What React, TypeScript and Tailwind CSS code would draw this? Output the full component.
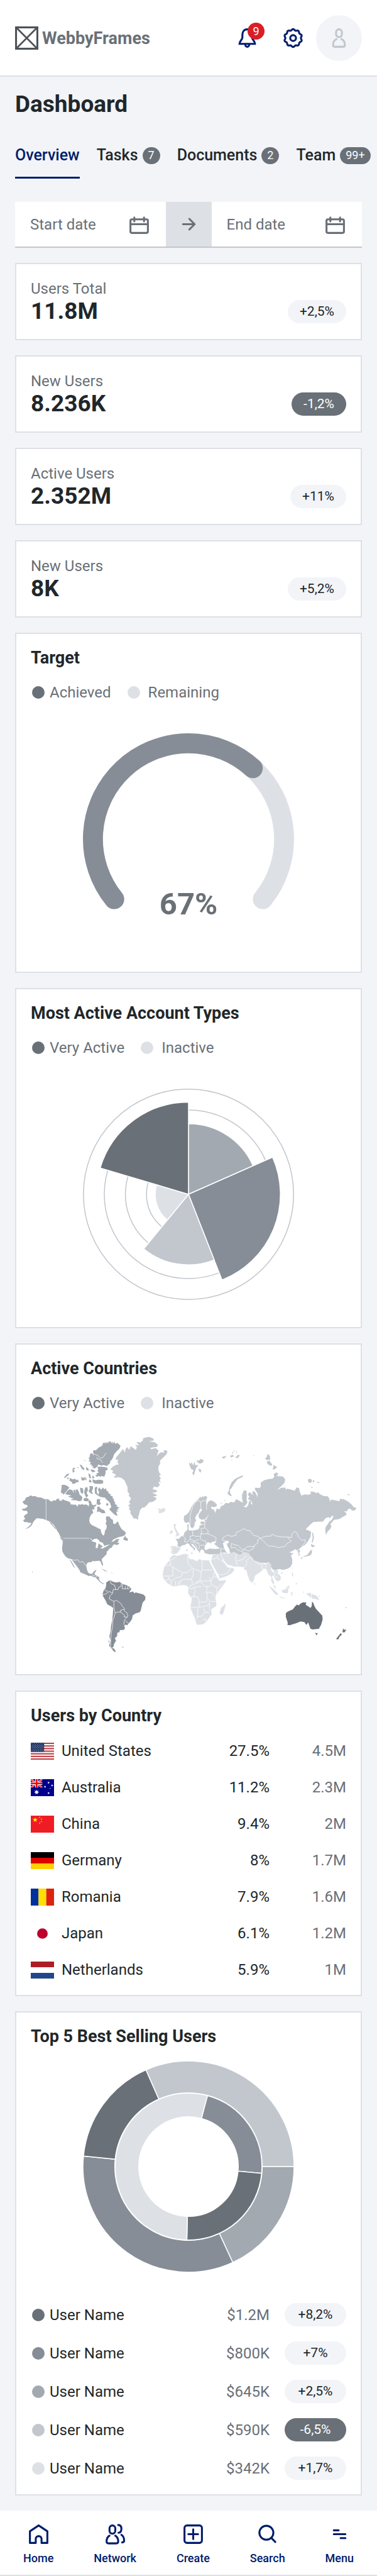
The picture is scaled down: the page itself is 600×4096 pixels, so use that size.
import React from "react";

type Children = { children: React.ReactNode };

const SHADES = ["#697077", "#878d96", "#a2a9b0", "#c1c7cd", "#dde1e6"];

/* ---------- geometry helpers ---------- */

// Point on a circle around (220, 220); the angle runs clockwise from 12 o'clock.
function at(radius: number, degrees: number) {
  const t = (degrees * Math.PI) / 180;
  return `${(220 + radius * Math.sin(t)).toFixed(2)} ${(220 - radius * Math.cos(t)).toFixed(2)}`;
}

function wedge(radius: number, from: number, to: number) {
  const large = to - from > 180 ? 1 : 0;
  return `M220 220L${at(radius, from)}A${radius} ${radius} 0 ${large} 1 ${at(radius, to)}Z`;
}

function ringPart(outer: number, inner: number, from: number, to: number) {
  const large = to - from > 180 ? 1 : 0;
  return `M${at(outer, from)}A${outer} ${outer} 0 ${large} 1 ${at(outer, to)}L${at(inner, to)}A${inner} ${inner} 0 ${large} 0 ${at(inner, from)}Z`;
}

function arc(radius: number, from: number, to: number) {
  const large = to - from > 180 ? 1 : 0;
  return `M${at(radius, from)}A${radius} ${radius} 0 ${large} 1 ${at(radius, to)}`;
}

function gearPath() {
  const points: string[] = [];
  for (let i = 0; i < 120; i++) {
    const t = (i / 120) * Math.PI * 2;
    const r = 8.6 + 0.6 * Math.cos(10 * t);
    points.push(`${(12 + r * Math.sin(t)).toFixed(2)} ${(12 - r * Math.cos(t)).toFixed(2)}`);
  }
  return `M${points.join("L")}Z`;
}

/* ---------- icons ---------- */

function Icon({ children }: Children) {
  return (
    <svg
      viewBox="0 0 24 24"
      className="size-[37px] shrink-0"
      fill="none"
      stroke="currentColor"
      strokeWidth="2"
      strokeLinecap="round"
      strokeLinejoin="round"
      aria-hidden="true"
    >
      {children}
    </svg>
  );
}

const BellIcon = () => (
  <Icon>
    <path
      strokeLinejoin="miter"
      d="M12 3C8.7 3 7 5.5 7 8.5v3C7 13.5 4 15 4 18h16c0-3-3-4.500-3-6.500v-3C17 5.500 15.300 3 12 3Z"
    />
    <path strokeLinecap="butt" d="M10 18.500v.5a2 2 0 0 0 4 0v-.5" />
  </Icon>
);

const GearIcon = () => (
  <Icon>
    <path d={gearPath()} />
    <circle cx="12" cy="12" r="3" />
  </Icon>
);

const PersonIcon = () => (
  <Icon>
    <rect x="9" y="3" width="6" height="8" rx="3" />
    <path d="M9.500 13C7 14.200 6 16.300 6 18.500v1A1.500 1.500 0 0 0 7.500 21h9a1.500 1.500 0 0 0 1.500-1.500v-1c0-2.200-1-4.300-3.500-5.500" />
  </Icon>
);

const CalendarIcon = () => (
  <Icon>
    <rect x="3" y="7" width="18" height="14" rx="1.500" />
    <path d="M3 12h18M7 5v4M17 5v4" />
  </Icon>
);

const ArrowIcon = () => (
  <Icon>
    <path d="M6 12h12M12.500 6.500 18 12l-5.500 5.500" />
  </Icon>
);

const HomeIcon = () => (
  <Icon>
    <path strokeLinecap="butt" d="M3 21h6v-4a3 3 0 0 1 6 0v4h6V9l-9-6-9 6Z" />
  </Icon>
);

const NetworkIcon = () => (
  <Icon>
    <rect x="6" y="3" width="6" height="8.500" rx="3" />
    <path d="M6 13.500c-2 1.200-3 3.500-3 6C3 21 3.800 21.500 5 21.500h8c1.200 0 2-.5 2-2 0-2.500-1-4.800-3-6" />
    <path d="M15 2.500c2.300 0 3.300 1.500 3.300 4s-1 4-3 4M18.300 12.700c2 1.300 2.800 3.300 2.800 5.800 0 1.500-.6 2-2.100 2" />
  </Icon>
);

const CreateIcon = () => (
  <Icon>
    <rect x="3" y="3" width="18" height="18" rx="2.500" />
    <path d="M12 7v10M7 12h10" />
  </Icon>
);

const SearchIcon = () => (
  <Icon>
    <circle cx="11" cy="10.500" r="7.200" />
    <path d="m16.200 16 4 4" />
  </Icon>
);

const MenuIcon = () => (
  <Icon>
    <path d="M6 8h5M6 12h12M13 16h5" />
  </Icon>
);

const LogoMark = () => (
  <svg viewBox="0 0 48 48" className="size-[37px] shrink-0" fill="none" stroke="#4d5358" aria-hidden="true">
    <rect x="2" y="2" width="44" height="44" strokeWidth="4" />
    <path d="m3 3 42 42M45 3 3 45" strokeWidth="3.500" />
  </svg>
);

/* ---------- small parts ---------- */

function Dot({ color }: { color: string }) {
  return (
    <svg viewBox="0 0 24 24" className="size-6 shrink-0" aria-hidden="true">
      <circle cx="12" cy="12" r="10" fill={color} />
    </svg>
  );
}

function Card({ title, children }: { title: string } & Children) {
  return (
    <section className="border-2 border-[#dde1e6] bg-white pt-[22px]">
      <h2 className="px-[23px] text-[27px] leading-8 font-bold">{title}</h2>
      {children}
    </section>
  );
}

function Legend({ first, second }: { first: string; second: string }) {
  return (
    <ul className="mt-[22px] flex gap-6 px-[23px] text-2xl leading-[34px] text-[#697077]">
      <li className="flex items-center gap-1.5">
        <Dot color="#697077" />
        {first}
      </li>
      <li className="flex items-center gap-[11px]">
        <Dot color="#dde1e6" />
        {second}
      </li>
    </ul>
  );
}

function pillTone(change: string) {
  return change.startsWith("-") ? "bg-[#697077] text-white" : "bg-[#f2f4f8] text-[#21272a]";
}

/* ---------- page sections ---------- */

function Header() {
  return (
    <header className="flex items-center justify-between border-b-2 border-[#dde1e6] bg-white px-6 pt-6 pb-[23px]">
      <a href="#home" className="flex items-center gap-1.5 text-[27px] leading-9 font-bold text-[#697077]">
        <LogoMark />
        WebbyFrames
      </a>
      <div className="flex items-center text-[#001d6c]">
        <button type="button" aria-label="Notifications" className="relative mr-9">
          <BellIcon />
          <span className="absolute -top-[6px] left-[19px] flex size-[27px] items-center justify-center rounded-full bg-[#da1e28] text-lg leading-none text-white">
            9
          </span>
        </button>
        <button type="button" aria-label="Settings" className="mr-[18px]">
          <GearIcon />
        </button>
        <button
          type="button"
          aria-label="Profile"
          className="flex size-[73px] items-center justify-center rounded-full bg-[#f2f4f8] text-[#c1c7cd]"
        >
          <PersonIcon />
        </button>
      </div>
    </header>
  );
}

const tabs = [
  { name: "Overview", badge: "", active: true },
  { name: "Tasks", badge: "7", active: false },
  { name: "Documents", badge: "2", active: false },
  { name: "Team", badge: "99+", active: false },
];

function Tabs() {
  return (
    <nav className="mt-[23px] flex gap-[27px] pl-6 text-[25px] leading-8 font-medium whitespace-nowrap">
      {tabs.map((tab) => (
        <a
          key={tab.name}
          href={`#${tab.name.toLowerCase()}`}
          className={
            tab.active
              ? "flex items-center border-b-[3px] border-[#001d6c] pt-5 pb-[18px] text-[#001d6c]"
              : "flex items-center gap-[7px] border-b-[3px] border-transparent pt-5 pb-[18px]"
          }
        >
          {tab.name}
          {tab.badge && (
            <span className="flex h-[27px] min-w-[27px] items-center justify-center rounded-full bg-[#697077] px-[9px] text-lg leading-none font-normal text-white">
              {tab.badge}
            </span>
          )}
        </a>
      ))}
    </nav>
  );
}

function DateField({ id, label }: { id: string; label: string }) {
  return (
    <div className="flex min-w-0 flex-1 items-center bg-white px-6 text-[#697077]">
      <input
        id={id}
        type="text"
        aria-label={label}
        placeholder={label}
        className="w-full min-w-0 flex-1 bg-transparent text-2xl leading-8 outline-none placeholder:text-[#697077] placeholder:opacity-100"
      />
      <CalendarIcon />
    </div>
  );
}

function DateRange() {
  return (
    <div className="flex border-b-2 border-[#c1c7cd]">
      <DateField id="start-date" label="Start date" />
      <div className="flex items-center justify-center bg-[#dde1e6] px-[18px] py-[17px] text-[#697077]">
        <ArrowIcon />
      </div>
      <DateField id="end-date" label="End date" />
    </div>
  );
}

const stats = [
  { label: "Users Total", value: "11.8M", change: "+2,5%" },
  { label: "New Users", value: "8.236K", change: "-1,2%" },
  { label: "Active Users", value: "2.352M", change: "+11%" },
  { label: "New Users", value: "8K", change: "+5,2%" },
];

function StatCard({ label, value, change }: (typeof stats)[number]) {
  return (
    <section className="flex items-end justify-between border-2 border-[#dde1e6] bg-white px-[23px] pt-[22px] pb-[25px]">
      <div>
        <p className="text-2xl leading-[34px] text-[#697077]">{label}</p>
        <p className="text-[37px] leading-[38px] font-bold">{value}</p>
      </div>
      <span className={`flex h-[37px] items-center rounded-full px-[19px] text-[21px] leading-none ${pillTone(change)}`}>
        {change}
      </span>
    </section>
  );
}

function TargetCard() {
  return (
    <Card title="Target">
      <Legend first="Achieved" second="Remaining" />
      <div className="relative mx-auto mt-12 mb-[43px] w-[336px]">
        <svg viewBox="0 0 440 440" className="w-full" fill="none" strokeWidth="41.500" strokeLinecap="round" aria-hidden="true">
          <path d={arc(199.2, 231, 489)} stroke="#dde1e6" />
          <path d={arc(199.2, 231, 402.3)} stroke="#878d96" />
        </svg>
        <p className="absolute inset-x-0 bottom-8 text-center text-[49px] leading-[64px] font-bold text-[#697077]">67%</p>
      </div>
    </Card>
  );
}

const wedges = [
  { radius: 147, from: 0, to: 66.2, color: "#a2a9b0" },
  { radius: 191.5, from: 66.2, to: 158.6, color: "#878d96" },
  { radius: 147, from: 158.6, to: 219.4, color: "#c1c7cd" },
  { radius: 69.5, from: 219.4, to: 286.6, color: "#dde1e6" },
  { radius: 192, from: 286.6, to: 360, color: "#697077" },
];

function AccountTypesCard() {
  return (
    <Card title="Most Active Account Types">
      <Legend first="Very Active" second="Inactive" />
      <svg viewBox="0 0 440 440" className="mx-auto mt-12 mb-[43px] w-[336px]" aria-hidden="true">
        <g fill="none" stroke="#c1c7cd" strokeWidth="2">
          {[219, 175.5, 131.5, 87.5].map((r) => (
            <circle key={r} cx="220" cy="220" r={r} />
          ))}
        </g>
        {wedges.map((w) => (
          <path key={w.color} d={wedge(w.radius, w.from, w.to)} fill={w.color} stroke="#fff" strokeWidth="2" />
        ))}
      </svg>
    </Card>
  );
}

const northAmerica = [
  "M32 440 48 428 54 414 72 408 84 400 96 406 110 404 128 412 150 414 170 424 192 424 208 436 218 438 226 430 240 432 250 420 264 424 262 432 274 434 286 424 296 430 310 434 326 440 334 448 332 456 350 458 368 458 376 472 382 456 396 458 410 454 416 460 430 456 440 462 446 470 450 452 444 440 452 428 462 440 466 456 476 462 486 460 496 454 492 466 480 474 484 488 468 486 472 498 476 508 462 520 452 540 450 560 456 576 470 588 490 596 512 608 522 612 524 630 532 646 540 652 546 640 548 622 558 606 560 590 552 576 558 562 554 548 556 532 576 532 586 546 598 552 600 576 612 580 620 570 630 562 634 578 644 596 654 612 668 622 680 634 672 650 656 656 636 660 616 668 600 676 590 690 604 684 620 674 640 672 630 684 634 690 620 694 640 698 626 710 606 706 598 712 592 724 574 734 570 744 560 750 558 768 540 786 528 798 530 812 536 828 534 842 528 834 522 816 512 808 500 810 484 812 470 810 462 818 446 818 434 826 432 844 436 866 444 882 456 890 470 888 478 876 496 864 490 878 482 888 488 898 500 904 514 912 510 922 518 936 534 948 546 952 536 954 520 944 508 932 490 914 472 908 462 902 448 904 430 896 408 886 394 880 390 868 372 842 350 814 336 798 322 796 304 784 292 768 282 750 280 728 284 700 284 684 290 680 280 668 266 652 262 640 250 622 240 600 228 584 214 570 196 560 180 554 160 546 140 544 122 542 108 556 100 566 90 588 72 602 46 612 70 596 88 578 84 570 70 572 60 566 46 568 36 556 50 546 40 532 52 520 66 512 60 496 40 496 26 486 48 482 66 470 60 460 44 456Z",
  "M538 70 546 76 548 66 556 78 560 64 568 76 572 64 584 62 588 76 594 62 598 78 606 64 612 78 626 72 646 90 640 106 622 124 606 142 598 164 588 182 580 184 582 196 574 204 560 216 540 210 524 214 508 206 500 220 484 232 470 226 476 214 464 218 464 204 452 208 460 194 446 184 454 176 444 166 454 162 452 156 458 138 466 136 480 152 474 128 476 118 492 118 510 100 530 90Z",
  "M500 222 520 220 540 222 562 226 566 240 552 246 552 262 544 284 528 278 520 284 508 278 500 284 486 276 500 270 494 262 510 258 500 244 508 238Z",
  "M470 300 490 306 510 302 536 306 538 318 534 326 510 328 484 326 472 316Z",
  "M330 290 344 300 362 296 370 306 380 300 384 316 370 318 356 328 340 326 344 318 326 308Z",
  "M290 292 308 268 324 262 320 274 310 280 300 290ZM346 232 358 226 362 232 352 240 360 250 346 258ZM390 206 404 212 410 224 420 230 414 244 400 228ZM430 222 444 232 448 246 432 242ZM398 284 412 292 420 284 424 304 404 308ZM444 262 456 268 462 296 450 290ZM450 300 462 306 464 320 448 316ZM456 238 476 240 490 250 470 256ZM420 180h5v5h-5ZM308 288 322 290 318 302ZM424 286 432 290 432 306 426 304ZM376 222 384 226 380 232ZM470 276 482 286 478 296 468 290Z",
  "M278 334 296 334 312 340 326 352 316 364 304 378 290 394 272 380 276 360Z",
  "M312 372 328 362 344 368 356 388 350 366 362 366 368 384 366 364 376 362 386 380 390 396 402 404 408 416 400 434 384 436 366 430 350 430 332 428 352 420 338 416 316 406 340 402 326 398 300 392Z",
  "M392 352 410 356 414 376 408 392 396 380ZM450 342 472 342 474 356 466 374 474 392 458 386 446 374 454 356ZM424 352 438 348 442 366 434 386 444 402 432 414 424 400 418 380ZM412 424 430 414 448 424 444 436 420 436Z",
  "M484 352 496 346 502 352 496 366 498 382 506 396 512 380 504 364 514 350 524 366 536 350 544 362 556 356 558 370 572 378 568 386 584 392 582 400 598 408 596 416 606 426 604 434 614 446 608 452 626 462 618 468 640 476 628 480 634 490 620 488 632 504 618 500 624 520 628 530 608 520 594 506 580 492 574 486 588 474 582 452 574 438 560 428 548 414 530 412 516 408 500 398 486 388Z",
  "M500 472 512 470 526 486 544 492 552 510 530 512 518 504 510 500 498 506 500 486ZM556 450 570 450 568 464 556 462ZM498 424 520 424 516 440 524 452 510 462 496 452Z",
  "M662 672 676 652 680 664 690 668 692 684 670 680ZM324 798 338 812 350 832 362 856 350 844 338 822ZM526 858 542 864 566 878 550 874ZM92 878h4v4h-4ZM200 566 214 572 226 590 242 604 244 614 224 594ZM266 656 290 678 286 686 270 668Z",
];

const southAmerica = [
  "M556 944 572 934 584 932 600 940 620 944 640 940 650 948 664 956 680 960 700 970 714 984 700 1006 724 1000 732 1012 740 1006 770 1014 790 1020 802 1034 800 1052 784 1070 778 1096 772 1120 766 1130 740 1138 722 1150 718 1172 706 1190 694 1204 688 1212 676 1208 668 1216 674 1228 668 1240 642 1242 638 1256 626 1258 624 1280 610 1292 618 1308 606 1328 600 1350 586 1352 574 1340 584 1310 576 1280 584 1250 586 1220 594 1180 598 1140 600 1104 584 1092 564 1082 552 1056 536 1030 534 1016 540 994 552 980 556 960Z",
  "M584 1354 604 1356 618 1378 604 1376 594 1362ZM570 1300l6 14-2 12ZM656 1346h8v4h-8Z",
];

const greenland =
  "M582 238 596 222 614 210 634 206 626 190 632 178 614 176 620 160 638 140 650 124 662 110 674 134 676 112 688 98 700 116 708 92 726 104 742 116 748 98 738 84 762 88 744 66 770 70 788 54 784 46 800 38 826 34 850 44 856 56 824 62 860 68 880 84 874 96 836 102 834 112 866 104 884 120 872 154 886 140 900 130 920 134 914 120 932 118 940 128 930 146 908 168 892 184 894 200 884 216 882 240 890 262 900 270 886 278 898 292 890 304 898 318 882 314 892 336 876 350 856 344 846 362 866 366 878 374 860 382 842 384 864 392 876 402 848 408 872 416 864 430 846 440 824 444 812 460 798 474 780 478 768 492 762 516 756 536 756 552 742 544 728 544 716 524 706 510 710 500 698 484 704 476 694 462 708 452 698 442 712 420 696 400 702 390 690 378 690 350 682 330 670 306 650 290 630 286 606 292 612 284 600 282 620 274 606 264 592 258 600 246Z";

const northEurasia = [
  "M284 438 300 430 320 440 336 456 334 470 314 474 300 470 304 486 318 488 326 510 336 482 352 488 364 466 378 462 392 446 408 450 424 440 444 444 458 424 478 434 500 446 494 420 494 396 506 368 522 370 524 400 522 430 528 440 516 464 502 470 520 476 532 462 540 432 548 434 552 456 560 456 554 440 544 428 530 424 540 408 530 396 540 378 556 392 564 400 556 376 572 374 586 398 588 416 592 390 574 362 576 352 604 354 612 344 610 320 632 306 660 298 684 296 696 284 692 266 710 256 720 264 712 280 736 280 752 284 764 300 760 320 746 336 728 352 714 368 740 352 766 352 768 366 776 358 800 364 824 370 834 350 852 356 854 376 866 402 884 394 912 396 926 388 922 374 946 378 958 386 970 380 980 392 1004 404 1030 406 1040 420 1044 440 1050 426 1076 430 1104 436 1106 422 1130 424 1160 440 1180 458 1192 474 1210 478 1200 494 1180 494 1174 484 1158 484 1150 500 1130 498 1144 508 1148 522 1126 534 1100 548 1070 552 1060 564 1046 580 1054 592 1044 612 1030 624 1020 648 1014 620 1016 600 1032 576 1040 564 1056 552 1066 530 1056 528 1044 542 1034 536 1014 544 1000 564 976 564 940 566 920 584 892 612 912 620 926 628 922 660 908 684 890 708 872 718 852 734 858 752 846 756 838 744 826 736 806 750 790 754 804 762 818 758 800 776 808 800 808 826 796 848 780 858 750 866 728 860 700 868 686 864 678 848 676 834 664 820 640 824 610 822 590 820 566 808 562 796 544 776 536 760 512 756 496 762 480 772 460 764 444 754 420 764 380 758 360 756 350 766 320 768 290 768 262 762 254 744 240 736 232 748 230 762 222 748 214 742 204 724 190 708 176 700 180 712 196 726 202 736 192 746 190 732 172 718 160 702 148 700 142 708 120 712 108 722 90 718 92 700 88 684 76 674 100 670 112 656 130 650 134 630 146 622 154 610 150 584 160 578 160 618 178 620 196 618 220 612 228 600 226 592 240 584 232 572 240 562 262 566 256 552 270 552 284 524 276 500 272 460Z",
  "M130 540 132 528 150 518 164 500 176 476 192 450 206 436 222 424 232 408 240 416 246 404 254 412 262 402 276 410 270 430 272 460 284 500 282 526 264 548 240 552 224 540 222 522 236 500 244 492 238 480 228 490 224 506 208 524 200 544 208 556 198 570 196 590 184 606 174 600 166 580 160 564 150 572 138 570 130 556Z",
  "M500 274 498 284 466 300 446 324 430 352 418 366 420 388 432 404 416 402 402 386 412 370 416 346 430 316 452 296 480 282Z",
  "M162 192 172 204 178 192 188 212 196 188 200 210 220 210 206 230 200 250 192 276 182 260 192 244 176 236 166 214ZM208 180 222 184 236 172 254 180 250 194 230 202 214 192ZM222 232 238 240 236 258 224 248Z",
  "M366 160 384 156 398 152 380 172ZM420 152 436 146 444 156 424 164ZM440 118l8 4-4 6ZM452 160 460 156 468 146 480 148 468 166 456 166ZM424 182l8-4 0 6ZM432 132h8v6h-8ZM456 126l8 4-6 6ZM564 150h6v3h-6Z",
  "M636 168 646 164 656 140 668 154 670 176 650 180ZM648 192 664 182 684 208 676 216 656 206ZM686 240 692 208 700 216 714 222 700 236Z",
  "M906 300 920 296 932 304 926 322 908 318ZM938 304 948 308 942 318 936 314ZM960 314 982 320 968 323ZM924 344 938 350 930 354ZM1150 398 1164 391 1168 398ZM756 338l6 0-2 6ZM382 430l8 0-4 8ZM360 444l8 4-6 6Z",
  "M932 628 940 640 944 664 934 700 930 690 936 664ZM924 704 950 714 940 724 928 720ZM932 740 930 764 918 776 890 782 870 784 904 770 922 744ZM862 790 872 786 868 802ZM738 882h8l-2 6h-6ZM147 736h5v12h-5ZM172 757 186 760 180 766Z",
];

const southLands = [
  "M878 486 890 482 898 488 914 478 926 484 924 498 908 508 890 512 880 502 890 496ZM584 880 602 886 590 888Z",
];

const southLandsEast = [
  "M66 580 82 580 76 600 88 620 92 632 104 640 98 652 76 656 84 640 74 618 68 602ZM44 624 60 616 58 636 42 642Z",
  "M46 718 72 716 92 724 112 728 100 746 88 762 64 768 48 758 52 738Z",
  "M64 772 90 778 120 768 148 766 160 770 156 786 168 798 190 800 212 812 224 798 244 804 270 806 286 806 300 822 318 862 326 886 346 920 352 934 396 930 384 950 352 992 334 1020 326 1040 332 1062 334 1090 306 1108 300 1120 304 1144 288 1164 270 1190 250 1206 214 1210 206 1196 200 1170 186 1140 170 1100 176 1070 180 1044 168 1030 156 1010 158 980 152 966 130 960 104 964 60 968 30 950 10 932 0 912 -2 900 0 880 6 850 20 830 40 806 44 790Z",
  "M310 774 340 766 356 752 384 764 404 760 420 764 444 756 470 770 496 764 520 756 540 762 556 790 566 808 600 822 640 830 664 820 680 840 676 862 684 880 700 866 722 872 716 884 736 906 736 926 718 938 704 926 690 900 680 906 696 948 690 956 676 936 678 912 656 890 648 866 640 858 626 860 620 870 600 884 576 900 568 930 556 948 540 930 526 890 524 870 504 862 510 850 480 846 440 844 400 830 398 822 416 848 440 856 446 866 430 886 400 904 352 920 348 900 330 870 312 840 300 812 306 790Z",
  "M842 756 854 754 858 774 846 780ZM569 944 577 954 571 961ZM388 1074 390 1092 376 1140 362 1148 354 1132 362 1104 376 1092Z",
  "M662 966 684 980 716 1010 720 1026 700 1016 680 992ZM722 1034 740 1036 770 1044 740 1042ZM742 990 766 984 784 962 792 972 784 984 780 1012 748 1008ZM688 956 702 968 706 984 696 980ZM800 1006 818 1004 806 1012 810 1028 802 1026ZM806 880 814 890 812 910 806 900ZM828 950 838 946 836 960ZM806 850l6 4-4 8ZM872 1002 884 1004 880 1010ZM894 1016 916 1008 940 1020 960 1026 978 1054 950 1048 926 1042 912 1028ZM968 1030 988 1028 974 1034Z",
];

const oceania = [
  "M768 1136 780 1126 812 1112 824 1096 838 1082 848 1088 860 1076 876 1068 896 1070 892 1084 908 1094 922 1104 930 1092 932 1064 940 1072 946 1090 956 1108 976 1130 996 1152 998 1176 988 1210 974 1234 950 1236 940 1238 922 1234 912 1206 908 1194 896 1210 884 1192 860 1188 830 1200 810 1206 792 1212 778 1210 780 1196 768 1160Z",
  "M950 1258 960 1262 968 1260 960 1276ZM1126 1232 1134 1240 1146 1238 1136 1256 1122 1256ZM1112 1260 1118 1272 1104 1282 1096 1300 1082 1298 1094 1282ZM1143 1100h4v4h-4Z",
];

const inlandWaterWest =
  "M464 686 480 672 498 670 512 682 518 692 532 694 544 712 536 720 524 710 508 700 502 730 490 728 494 696 478 690ZM518 730 546 714 582 706 560 718 534 732ZM452 666 468 674 466 680Z";

const inlandWaterEast =
  "M258 736 262 712 280 692 300 700 310 708 298 694 320 688 334 688 320 704 344 724 350 734 320 734 290 732 268 742ZM374 698 396 684 412 688 410 698 398 702 404 720 414 734 416 752 424 758 406 764 392 750 382 730ZM288 812 300 816 322 856 346 896 352 918 344 922 326 886 308 848ZM368 796 388 816 408 838 430 846 424 852 404 850 388 828 374 812Z";

const bordersWest =
  "M322 796 344 802 358 806 378 802 392 818 402 814 412 816 424 834 434 840M484 142 506 152 522 168 538 162 556 134M498 160 500 172 520 176 534 196M582 934 586 952 610 962 614 988 630 990 634 974 650 970 650 952M536 1022 556 1014 576 1000 596 1012 600 988 616 988M546 992 566 1000M596 1012 578 1030 576 1048 596 1058 604 1062 620 1056 648 1076 656 1092 670 1106 668 1120 686 1134 692 1152M604 1062 604 1100 612 1134 634 1128 646 1130 646 1118 668 1112M646 1130 672 1150 668 1160 688 1160 692 1152M688 1160 670 1180 666 1208M676 1184 696 1200M612 1134 606 1160 598 1180 596 1220 588 1260 584 1310 584 1350M652 952 660 962 656 984 680 984 700 984 708 974M676 966 674 984M692 966 690 984M470 898 484 904 M486 914 500 906M590 690 610 682";

const bordersEast =
  "M168 590 170 560 168 530 176 500 186 470 200 446 216 432 236 440 236 478M236 440 262 430 272 440 272 490M262 556 260 600 282 620 280 640 300 648 332 664 328 688M412 690 390 684 372 680 374 664 392 654 406 648 426 656 456 650 458 630 480 624 502 608 528 620 544 620 566 650 594 656 608 668 590 680 594 696 572 712 570 720 530 720 512 732 496 740 470 714 446 708 428 700 426 728M608 668 640 656 676 654 682 642 700 652 740 660 780 660 790 676 802 686 776 700 760 720 716 726 696 718 658 716 634 692 608 668M780 660 804 664 806 640 820 626 836 632 848 662 868 680 890 678 886 698 868 716 872 732 850 740 838 744M426 728 446 724 470 742 496 752 506 740 536 748 560 736 572 714M496 752 500 762M120 652 140 668 134 690 150 692M184 622 186 650 204 656 232 656 240 640M150 690 170 676 168 656 186 652M170 676 200 684 226 674M170 692 196 690 228 700M236 656 234 672 246 682 266 684 268 704M232 640 262 640 282 640M232 610 260 604M190 690 206 712 214 736M232 712 258 712M210 694 228 712 224 738M240 616 240 640M228 580 258 582M340 724 366 734 384 736M360 734 362 756M154 790 156 824 186 856 240 878M244 804 244 866 308 866M240 866 236 906 230 932M20 838 46 836 60 848 122 884M60 848 62 904 28 904M122 884 112 910 82 914 62 930 50 936M122 884 150 882 180 858 190 870 188 900 176 924 118 924 112 940M176 924 184 940 180 960 158 976M184 960 206 950 236 940 260 968 296 970M230 932 250 936 300 934 300 960 340 976 372 952M230 932 204 944M318 880 318 900 304 930M318 905 350 920M160 980 186 984 190 970M190 1034 196 1010 200 972 240 970M176 1034 218 1034 226 1066 270 1066 276 1046 272 1000 276 970M270 1006 300 1006 328 1030M226 1066 226 1098 170 1100M226 1098 262 1094 290 1080M280 1048 300 1062 332 1064M218 1104 218 1140 214 1140 214 1170M214 1158 240 1154 264 1130 288 1134M252 1108 264 1130M290 1060 290 1080 292 1120M46 816 40 806 60 800 82 786M46 816 46 836M150 770 154 790M50 936 50 966M78 936 78 964M96 936 96 964M104 932 108 960M0 904 28 904 40 924 50 936M10 932 40 924M334 1020 338 976M300 934 290 910M56 724 56 762M360 756 364 780 382 806M308 800 340 790 340 770M340 790 376 818M352 894 376 896 404 884 424 852M456 768 454 800 464 838M464 810 500 800 520 776M506 850 524 830 520 810 544 786M574 812 600 830 626 838M618 840 622 866M640 830 644 850M676 866 700 880 716 890M690 880 700 906 722 914M928 1010 928 1048M256 1176 264 1170 270 1178 262 1184 256 1176M420 764 380 758M664 820 640 824 610 822 566 808 544 776M744 990 770 988 784 976";

function CountriesCard() {
  return (
    <Card title="Active Countries">
      <Legend first="Very Active" second="Inactive" />
      <svg viewBox="-6 0 2154 1440" className="mt-7 mb-5 w-full" role="img" aria-label="World map of user activity">
        <g fill="#a2a9b0">
          {northAmerica.map((d) => (
            <path key={d} d={d} />
          ))}
        </g>
        <g fill="#878d96">
          {southAmerica.map((d) => (
            <path key={d} d={d} />
          ))}
        </g>
        <path d={greenland} fill="#c1c7cd" />
        <path d={southLands[0]} fill="#dde1e6" />
        <path d={inlandWaterWest} fill="#fff" />
        <path d="M180 426V554M288 668H450" stroke="#dde1e6" strokeWidth="4" />
        <path d={bordersWest} fill="none" stroke="#fff" strokeWidth="3" />
        <g transform="translate(912 0)">
          <g fill="#dde1e6">
            {southLandsEast.map((d) => (
              <path key={d} d={d} />
            ))}
          </g>
          <g fill="#c1c7cd">
            {northEurasia.map((d) => (
              <path key={d} d={d} />
            ))}
          </g>
          <g fill="#697077">
            {oceania.map((d) => (
              <path key={d} d={d} />
            ))}
          </g>
          <path d={inlandWaterEast} fill="#fff" />
          <path d={bordersEast} fill="none" stroke="#fff" strokeWidth="3" />
        </g>
      </svg>
    </Card>
  );
}

/* ---------- flags ---------- */

function star(cx: number, cy: number, r: number, tips: number, inner: number) {
  const points: string[] = [];
  for (let i = 0; i < tips * 2; i++) {
    const radius = i % 2 ? r * inner : r;
    const t = (i * Math.PI) / tips;
    points.push(`${(cx + radius * Math.sin(t)).toFixed(2)} ${(cy - radius * Math.cos(t)).toFixed(2)}`);
  }
  return `M${points.join("L")}Z`;
}

function Bands({ colors, vertical }: { colors: string[]; vertical?: boolean }) {
  return (
    <>
      {colors.map((color, i) =>
        vertical ? (
          <rect key={color} x={i * 16} y="0" width="16" height="36" fill={color} />
        ) : (
          <rect key={color} x="0" y={i * 12} width="48" height="12" fill={color} />
        ),
      )}
    </>
  );
}

const flags: Record<string, React.ReactNode> = {
  "United States": (
    <>
      <rect width="48" height="36" fill="#fff" />
      {[0, 1, 2, 3, 4, 5, 6].map((i) => (
        <rect key={i} y={i * 5.538} width="48" height="2.769" fill="#bd3d44" />
      ))}
      <rect width="27.500" height="19.400" fill="#192f5d" />
      {[0, 1, 2, 3, 4, 5, 6, 7, 8].map((row) =>
        (row % 2 ? [0, 1, 2, 3, 4] : [0, 1, 2, 3, 4, 5]).map((col) => (
          <path
            key={`${row}-${col}`}
            d={star(2.3 + col * 4.6 + (row % 2 ? 2.3 : 0), 2 + row * 1.93, 1, 5, 0.4)}
            fill="#fff"
          />
        )),
      )}
    </>
  ),
  Australia: (
    <>
      <rect width="48" height="36" fill="#00008b" />
      <path d="M0 0 24 18M24 0 0 18" stroke="#fff" strokeWidth="3.600" />
      <path d="M0 0 24 18M24 0 0 18" stroke="#f00" strokeWidth="1.400" />
      <path d="M12 0v18M0 9h24" stroke="#fff" strokeWidth="6" />
      <path d="M12 0v18M0 9h24" stroke="#f00" strokeWidth="3.600" />
      <rect x="24" width="24" height="36" fill="#00008b" />
      <rect y="18" width="24" height="18" fill="#00008b" />
      <g fill="#fff">
        <path d={star(12, 27.500, 5.5, 7, 0.45)} />
        <path d={star(36.7, 29.500, 2.5, 7, 0.45)} />
        <path d={star(29.3, 16, 2.5, 7, 0.45)} />
        <path d={star(36.7, 7.5, 2.5, 7, 0.45)} />
        <path d={star(44, 13.300, 2.5, 7, 0.45)} />
        <path d={star(40, 19.500, 1.5, 5, 0.4)} />
      </g>
    </>
  ),
  China: (
    <>
      <rect width="48" height="36" fill="#f01c24" />
      <g fill="#ff0">
        <path d={star(9, 9, 5.5, 5, 0.382)} />
        <path d={star(18.3, 3.4, 1.8, 5, 0.382)} />
        <path d={star(22, 7.2, 1.8, 5, 0.382)} />
        <path d={star(22, 12.4, 1.8, 5, 0.382)} />
        <path d={star(18.3, 16, 1.8, 5, 0.382)} />
      </g>
    </>
  ),
  Germany: <Bands colors={["#000", "#d00", "#ffce00"]} />,
  Romania: <Bands vertical colors={["#00319c", "#ffde00", "#de2110"]} />,
  Japan: (
    <>
      <rect width="48" height="36" fill="#fff" />
      <circle cx="24" cy="18" r="11" fill="#bc002d" />
    </>
  ),
  Netherlands: <Bands colors={["#ae1c28", "#fff", "#21468b"]} />,
};

const countries = [
  ["United States", "27.5%", "4.5M"],
  ["Australia", "11.2%", "2.3M"],
  ["China", "9.4%", "2M"],
  ["Germany", "8%", "1.7M"],
  ["Romania", "7.9%", "1.6M"],
  ["Japan", "6.1%", "1.2M"],
  ["Netherlands", "5.9%", "1M"],
];

function UsersByCountryCard() {
  return (
    <Card title="Users by Country">
      <div className="px-[23px] pt-[11px] pb-[11px]">
        <table className="w-full text-2xl leading-[34px]">
          <tbody>
            {countries.map(([name, share, users]) => (
              <tr key={name}>
                <th scope="row" className="py-3 text-left font-normal">
                  <span className="flex items-center gap-3">
                    <svg viewBox="0 0 48 36" preserveAspectRatio="none" className="h-[27px] w-[37px]" aria-hidden="true">
                      {flags[name]}
                    </svg>
                    {name}
                  </span>
                </th>
                <td className="py-3 text-right">{share}</td>
                <td className="w-[122px] py-3 text-right text-[#697077]">{users}</td>
              </tr>
            ))}
          </tbody>
        </table>
      </div>
    </Card>
  );
}

const outerRing = [
  { from: 336.2, to: 450, color: "#c1c7cd" },
  { from: 90, to: 155.2, color: "#a2a9b0" },
  { from: 155.2, to: 275.7, color: "#878d96" },
  { from: 275.7, to: 336.2, color: "#697077" },
];

const innerRing = [
  { from: 15, to: 95.3, color: "#878d96" },
  { from: 95.3, to: 181.3, color: "#697077" },
  { from: 181.3, to: 375, color: "#dde1e6" },
];

const sellers = [
  { amount: "$1.2M", change: "+8,2%" },
  { amount: "$800K", change: "+7%" },
  { amount: "$645K", change: "+2,5%" },
  { amount: "$590K", change: "-6,5%" },
  { amount: "$342K", change: "+1,7%" },
];

function BestSellersCard() {
  return (
    <Card title="Top 5 Best Selling Users">
      <svg viewBox="0 0 440 440" className="mx-auto mt-[23px] w-[336px]" stroke="#fff" strokeWidth="2" aria-hidden="true">
        {outerRing.map((p) => (
          <path key={p.color} d={ringPart(220, 153.5, p.from, p.to)} fill={p.color} />
        ))}
        {innerRing.map((p) => (
          <path key={p.color} d={ringPart(153, 103.7, p.from, p.to)} fill={p.color} />
        ))}
      </svg>
      <div className="px-[23px] pt-[37px] pb-[11px]">
        <table className="w-full text-2xl leading-[34px]">
          <tbody>
            {sellers.map((seller, i) => (
              <tr key={seller.amount}>
                <th scope="row" className="py-3 text-left font-normal">
                  <span className="flex items-center gap-1.5">
                    <Dot color={SHADES[i]} />
                    User Name
                  </span>
                </th>
                <td className="py-3 text-right text-[#697077]">{seller.amount}</td>
                <td className="w-[122px] py-3 pl-6">
                  <span
                    className={`flex h-[37px] items-center justify-center rounded-full text-[21px] leading-none ${pillTone(seller.change)}`}
                  >
                    {seller.change}
                  </span>
                </td>
              </tr>
            ))}
          </tbody>
        </table>
      </div>
    </Card>
  );
}

const destinations = [
  { name: "Home", icon: <HomeIcon /> },
  { name: "Network", icon: <NetworkIcon /> },
  { name: "Create", icon: <CreateIcon /> },
  { name: "Search", icon: <SearchIcon /> },
  { name: "Menu", icon: <MenuIcon /> },
];

function BottomNav() {
  return (
    <nav className="flex justify-between border-b-2 border-[#dde1e6] bg-white px-[37px] pt-[19px] pb-[14px] text-lg leading-6 font-medium text-[#001d6c]">
      {destinations.map((item) => (
        <a key={item.name} href={`#${item.name.toLowerCase()}`} className="flex flex-col items-center gap-2">
          {item.icon}
          {item.name}
        </a>
      ))}
    </nav>
  );
}

export default function App() {
  return (
    <div className="bg-[#f2f4f8] font-['Roboto',sans-serif] text-[#21272a]">
      <Header />
      <main>
        <h1 className="mt-[22px] px-6 text-[37px] leading-[44px] font-bold">Dashboard</h1>
        <Tabs />
        <div className="mt-[37px] flex flex-col gap-6 px-6 pb-6">
          <DateRange />
          {stats.map((stat) => (
            <StatCard key={stat.value} {...stat} />
          ))}
          <TargetCard />
          <AccountTypesCard />
          <CountriesCard />
          <UsersByCountryCard />
          <BestSellersCard />
        </div>
      </main>
      <BottomNav />
    </div>
  );
}
